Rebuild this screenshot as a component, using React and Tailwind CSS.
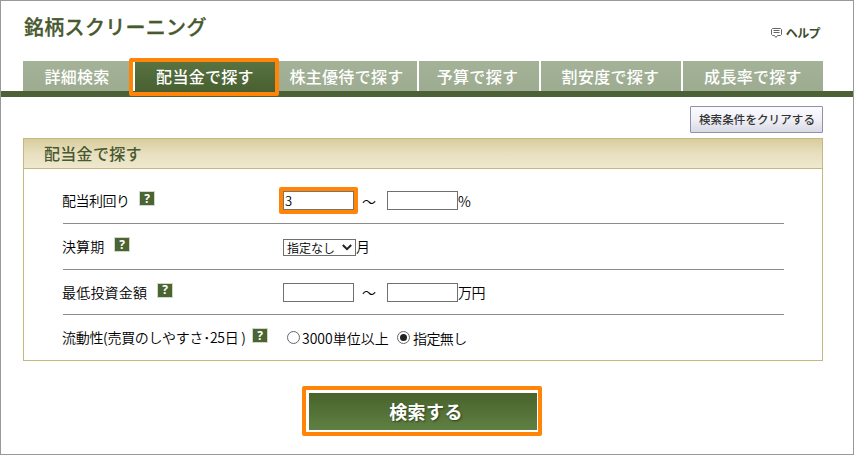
import { useState } from 'react';

const tabs = [
  { id: 'detail', label: '詳細検索', box: 'w-[110px] pr-0.5' },
  { id: 'dividend', label: '配当金で探す', box: 'w-[142px] pr-0.5' },
  { id: 'benefit', label: '株主優待で探す', box: 'w-[138px] pr-[3px]' },
  { id: 'budget', label: '予算で探す', box: 'w-[120px] pr-[3px]' },
  { id: 'value', label: '割安度で探す', box: 'w-[140px] pr-px' },
  { id: 'growth', label: '成長率で探す', box: 'w-[140px]' },
];

function HelpMark() {
  return (
    <button className="relative -top-0.5 w-4 h-[15px] shrink-0 border border-[#d0d8c8] bg-[#4b6433] text-white flex items-center justify-center font-['Open_Sans',sans-serif] font-bold text-[12px] leading-none">
      ?
    </button>
  );
}

function Row({ label, className, labelClass, children }) {
  return (
    <div className={`flex items-center border-[#8c8c8c] ${className}`}>
      <div className="flex w-[221px] -ml-px shrink-0 items-center">
        <span className={`whitespace-nowrap shrink-0 -mt-px ${labelClass}`}>{label}</span>
        <HelpMark />
      </div>
      {children}
    </div>
  );
}

function Field({ value, onChange, highlight }) {
  const input = (
    <input
      value={value}
      onChange={(e) => onChange(e.target.value)}
      className={`block w-[71px] h-[19px] shrink-0 border px-px text-[13px] leading-none bg-white ${highlight ? 'border-[#7d7468]' : 'border-[#707070]'}`}
    />
  );
  if (!highlight) return input;
  return <div className="-m-1 shrink-0 rounded-xs border-4 border-[#ff8408]">{input}</div>;
}

function Radio({ checked, onChange }) {
  return (
    <button
      onClick={onChange}
      className="flex w-[13px] h-[13px] shrink-0 items-center justify-center rounded-full border border-[#666] bg-white"
    >
      {checked && <span className="w-[7px] h-[7px] rounded-full bg-[#222]" />}
    </button>
  );
}

export default function App() {
  const [active, setActive] = useState('dividend');
  const [yieldMin, setYieldMin] = useState('3');
  const [yieldMax, setYieldMax] = useState('');
  const [amountMin, setAmountMin] = useState('');
  const [amountMax, setAmountMax] = useState('');
  const [liquidity, setLiquidity] = useState('none');

  return (
    <div className="w-[854px] h-[455px] overflow-hidden border border-[#999] bg-white text-black font-['Noto_Sans_CJK_JP',sans-serif]">
      <header className="flex h-[60px] justify-between pl-[23px] pr-[33px]">
        <h1 className="pt-3 text-[20px] leading-7 tracking-[0.3px] font-medium text-[#48592f] [-webkit-text-stroke:0.3px_#48592f]">銘柄スクリーニング</h1>
        <a className="flex items-center h-5 mt-[22px] gap-[3px] text-[12px] leading-none font-bold text-[#3c4a2c] tracking-[-0.6px]">
          <svg width="12" height="11" viewBox="0 0 12 11" fill="none" stroke="#666" strokeWidth="1">
            <path d="M1.500 .5h8l1 1v5l-1 1H6.500l-1.500 2l-1.500-2h-2l-1-1v-5z" />
            <path d="M2.500 2.500h6M2.500 4.500h6" />
          </svg>
          ヘルプ
        </a>
      </header>

      <nav className="flex h-9 pl-[22px] gap-0.5 border-b-6 border-[#4d6137]">
        {tabs.map((tab) => (
          <button
            key={tab.id}
            onClick={() => setActive(tab.id)}
            className={`shrink-0 whitespace-nowrap text-[16px] leading-none tracking-[0.3px] text-white font-medium ${tab.box} ${
              active === tab.id
                ? 'relative h-[31px] pb-0.5 bg-linear-to-b from-[#5a7342] to-[#48602f]'
                : 'h-[30px] pb-px bg-linear-to-b from-[#a4b397] to-[#9dab91]'
            }`}
          >
            {tab.label}
            {active === tab.id && (
              <span className="absolute -left-1.5 -top-[3px] w-[150px] h-[38px] rounded-xs border-4 border-[#ff8408]" />
            )}
          </button>
        ))}
      </nav>

      <div className="flex justify-end pt-[9px] pr-[30px]">
        <button className="w-[133px] h-[27px] rounded-[1px] border border-[#9090a8] bg-linear-to-b from-[#fafaff] via-[#f0f0f6] to-[#d9d9e6] pl-px text-[11.5px] leading-none tracking-[0.1px] font-medium text-[#333]">
          検索条件をクリアする
        </button>
      </div>

      <section className="ml-[22px] mt-[5px] w-[800px] h-[223px] border border-[#c3b97e]">
        <h2 className="h-[30px] border-b border-[#c3b97e] bg-linear-to-b from-[#d9cd9d] via-[#e8dfbf] to-[#efe8cd] pl-5 text-[16px] leading-[29px] tracking-[0.3px] font-medium text-[#48592f]">
          配当金で探す
        </h2>
        <div className="ml-[39px] w-[721px] text-[14px] leading-none font-[350]">
          <Row label="配当利回り" className="h-[55px] pt-[9px] border-b" labelClass="w-[77px] tracking-[-0.5px]">
            <Field value={yieldMin} onChange={setYieldMin} highlight />
            <span className="w-[33px] pl-2">～</span>
            <Field value={yieldMax} onChange={setYieldMax} />
            <span>%</span>
          </Row>
          <Row label="決算期" className="h-[46px] border-b" labelClass="w-[52px] tracking-[0.1px]">
            <button className="relative top-px flex items-center justify-between w-[73px] h-[17px] border border-[#707070] pl-[3px] pr-[3px] text-[12px] leading-none whitespace-nowrap">
              指定なし
              <svg width="10" height="7" viewBox="0 0 10 7" fill="none" stroke="#222" strokeWidth="2">
                <path d="M.8 1L5 5.200L9.200 1" />
              </svg>
            </button>
            <span className="-mt-px">月</span>
          </Row>
          <Row label="最低投資金額" className="h-[45px] border-b" labelClass="w-[95px] tracking-[0.2px]">
            <Field value={amountMin} onChange={setAmountMin} />
            <span className="w-[33px] pl-2">～</span>
            <Field value={amountMax} onChange={setAmountMax} />
            <span className="-mt-px tracking-[-0.5px]">万円</span>
          </Row>
          <Row label="流動性(売買のしやすさ･25日 )" className="h-[45px]" labelClass="w-[190px] tracking-[-0.3px]">
            <div className="flex items-center pl-1">
              <Radio checked={liquidity === '3000'} onChange={() => setLiquidity('3000')} />
              <span className="w-[97px] pl-0.5 whitespace-nowrap">3000単位以上</span>
              <Radio checked={liquidity === 'none'} onChange={() => setLiquidity('none')} />
              <span className="pl-[3px] tracking-[-0.6px]">指定無し</span>
            </div>
          </Row>
        </div>
      </section>

      <div className="flex pl-[301px] pt-[25px]">
        <div className="w-[240px] h-[50px] rounded-xs border-4 border-[#ff8408] p-[3px] pr-px pb-0.5">
          <button className="w-[228px] h-[37px] bg-linear-to-b from-[#48632c] to-[#5f8043] pl-1.5 pb-0.5 text-[18px] leading-none tracking-[0.4px] font-bold text-white text-shadow-[1px_1px_2px_#2c4018]">
            検索する
          </button>
        </div>
      </div>
    </div>
  );
}
